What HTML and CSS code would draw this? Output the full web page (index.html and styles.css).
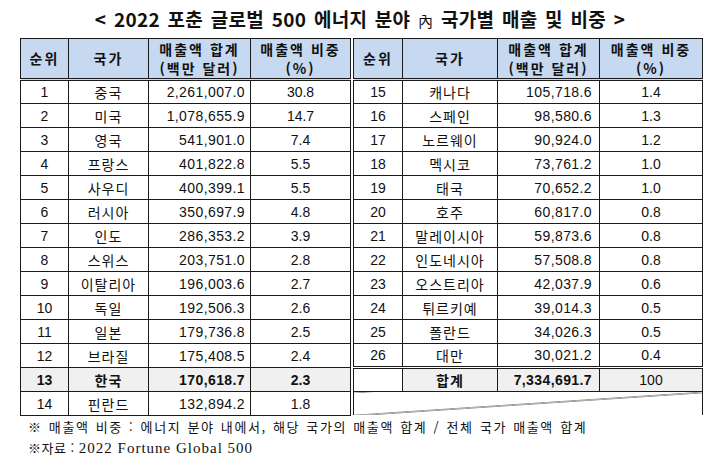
FILE: index.html
```html
<!DOCTYPE html>
<html lang="ko">
<head>
<meta charset="utf-8">
<title>2022 포춘 글로벌 500 에너지 분야 국가별 매출 및 비중</title>
<link rel="stylesheet" href="styles.css">
</head>
<body>
<div class="page">
  <h1 class="title">&lt; 2022 포춘 글로벌 500 에너지 분야 <span class="nae">內</span> 국가별 매출 및 비중 &gt;</h1>
  <div class="tables">
    <table class="tbl tbl-left">
      <colgroup><col class="w-rank"><col class="w-country"><col class="w-amt"><col class="w-pct"></colgroup>
      <thead>
        <tr><th>순위</th><th>국가</th><th>매출액 합계<br>(백만 달러)</th><th>매출액 비중<br>(%)</th></tr>
      </thead>
      <tbody>
        <tr><td>1</td><td class="ko">중국</td><td class="num">2,261,007.0</td><td>30.8</td></tr>
        <tr><td>2</td><td class="ko">미국</td><td class="num">1,078,655.9</td><td>14.7</td></tr>
        <tr><td>3</td><td class="ko">영국</td><td class="num">541,901.0</td><td>7.4</td></tr>
        <tr><td>4</td><td class="ko">프랑스</td><td class="num">401,822.8</td><td>5.5</td></tr>
        <tr><td>5</td><td class="ko">사우디</td><td class="num">400,399.1</td><td>5.5</td></tr>
        <tr><td>6</td><td class="ko">러시아</td><td class="num">350,697.9</td><td>4.8</td></tr>
        <tr><td>7</td><td class="ko">인도</td><td class="num">286,353.2</td><td>3.9</td></tr>
        <tr><td>8</td><td class="ko">스위스</td><td class="num">203,751.0</td><td>2.8</td></tr>
        <tr><td>9</td><td class="ko">이탈리아</td><td class="num">196,003.6</td><td>2.7</td></tr>
        <tr><td>10</td><td class="ko">독일</td><td class="num">192,506.3</td><td>2.6</td></tr>
        <tr><td>11</td><td class="ko">일본</td><td class="num">179,736.8</td><td>2.5</td></tr>
        <tr><td>12</td><td class="ko">브라질</td><td class="num">175,408.5</td><td>2.4</td></tr>
        <tr class="hl"><td>13</td><td class="ko">한국</td><td class="num">170,618.7</td><td>2.3</td></tr>
        <tr><td>14</td><td class="ko">핀란드</td><td class="num">132,894.2</td><td>1.8</td></tr>
      </tbody>
    </table>
    <table class="tbl tbl-right">
      <colgroup><col class="w-rank2"><col class="w-country2"><col class="w-amt2"><col class="w-pct2"></colgroup>
      <thead>
        <tr><th>순위</th><th>국가</th><th>매출액 합계<br>(백만 달러)</th><th>매출액 비중<br>(%)</th></tr>
      </thead>
      <tbody>
        <tr><td>15</td><td class="ko">캐나다</td><td class="num">105,718.6</td><td>1.4</td></tr>
        <tr><td>16</td><td class="ko">스페인</td><td class="num">98,580.6</td><td>1.3</td></tr>
        <tr><td>17</td><td class="ko">노르웨이</td><td class="num">90,924.0</td><td>1.2</td></tr>
        <tr><td>18</td><td class="ko">멕시코</td><td class="num">73,761.2</td><td>1.0</td></tr>
        <tr><td>19</td><td class="ko">태국</td><td class="num">70,652.2</td><td>1.0</td></tr>
        <tr><td>20</td><td class="ko">호주</td><td class="num">60,817.0</td><td>0.8</td></tr>
        <tr><td>21</td><td class="ko">말레이시아</td><td class="num">59,873.6</td><td>0.8</td></tr>
        <tr><td>22</td><td class="ko">인도네시아</td><td class="num">57,508.8</td><td>0.8</td></tr>
        <tr><td>23</td><td class="ko">오스트리아</td><td class="num">42,037.9</td><td>0.6</td></tr>
        <tr><td>24</td><td class="ko">튀르키예</td><td class="num">39,014.3</td><td>0.5</td></tr>
        <tr><td>25</td><td class="ko">폴란드</td><td class="num">34,026.3</td><td>0.5</td></tr>
        <tr class="last"><td>26</td><td class="ko">대만</td><td class="num">30,021.2</td><td>0.4</td></tr>
        <tr class="total"><td class="blank"></td><td class="ko">합계</td><td class="num">7,334,691.7</td><td class="plain">100</td></tr>
        <tr class="diag-row"><td class="diag" colspan="4"></td></tr>
      </tbody>
    </table>
  </div>
  <div class="notes">
    <p class="note note-wide">※ 매출액 비중 : 에너지 분야 내에서, 해당 국가의 매출액 합계 / 전체 국가 매출액 합계</p>
    <p class="note">※자료 : <span class="latin">2022 Fortune Global 500</span></p>
  </div>
</div>
</body>
</html>
```

FILE: styles.css
```css
* { box-sizing: border-box; }
html, body { margin: 0; padding: 0; background: #fff; }
body {
  width: 720px;
  height: 470px;
  overflow: hidden;
  color: #111;
  font-family: "Noto Sans CJK KR", "Noto Sans", sans-serif;
}
.page { display: flex; flex-direction: column; }

.title {
  margin: 0;
  height: 38px;
  padding-top: 7px;
  text-align: center;
  font-size: 19px;
  line-height: 24px;
  font-weight: 700;
  letter-spacing: 0.3px;
  word-spacing: 2px;
}
.nae { font-weight: 400; font-size: 15px; }

.tables {
  display: flex;
  gap: 2px;
  padding-left: 20px;
  align-items: flex-start;
}

.tbl {
  border-collapse: collapse;
  table-layout: fixed;
}
.tbl-left { width: 330px; }
.tbl-right { width: 349px; }
.w-rank { width: 48px; }
.w-country { width: 80px; }
.w-amt { width: 102px; }
.w-pct { width: 100px; }
.w-rank2 { width: 49px; }
.w-country2 { width: 95px; }
.w-amt2 { width: 102px; }
.w-pct2 { width: 103px; }

.tbl th, .tbl td {
  border: 1px solid #1a1a1a;
  padding: 0;
  text-align: center;
  vertical-align: middle;
}
.tbl th {
  background: #c6d9f1;
  height: 41px;
  font-family: "Noto Sans CJK KR", sans-serif;
  font-size: 14px;
  line-height: 19px;
  font-weight: 700;
  letter-spacing: 2px;
  border-bottom: 3px double #1a1a1a;
}
.tbl td {
  height: 24px;
  font-family: "Liberation Sans", "Noto Sans CJK KR", sans-serif;
  font-size: 14px;
  line-height: 22px;
}
.tbl td.ko {
  font-family: "Noto Sans CJK KR", sans-serif;
  letter-spacing: 1px;
}
.tbl td.num { text-align: right; padding-right: 5px; letter-spacing: 0.4px; }
.tbl-right td.num { padding-right: 7px; }

.tbl tr.hl td { background: #f0f0f0; font-weight: 700; }
.tbl tr.last td { border-bottom: 3px double #1a1a1a; }
.tbl tr.total td { background: #f0f0f0; font-weight: 700; }
.tbl tr.total td.blank { background: #fff; }
.tbl tr.total td.plain { font-weight: 400; }
.tbl td.diag {
  height: 23px;
  border-bottom: none;
  background: linear-gradient(to bottom right, transparent calc(50% - 0.8px), #333 50%, transparent calc(50% + 0.8px));
}

.notes { padding-left: 28px; }
.note {
  margin: 0;
  font-size: 13px;
  line-height: 21px;
  letter-spacing: 0.5px;
}
.note-wide { letter-spacing: 1.6px; word-spacing: 1px; }
.latin {
  font-family: "Liberation Serif", serif;
  font-size: 15px;
  letter-spacing: 1px;
}
```
